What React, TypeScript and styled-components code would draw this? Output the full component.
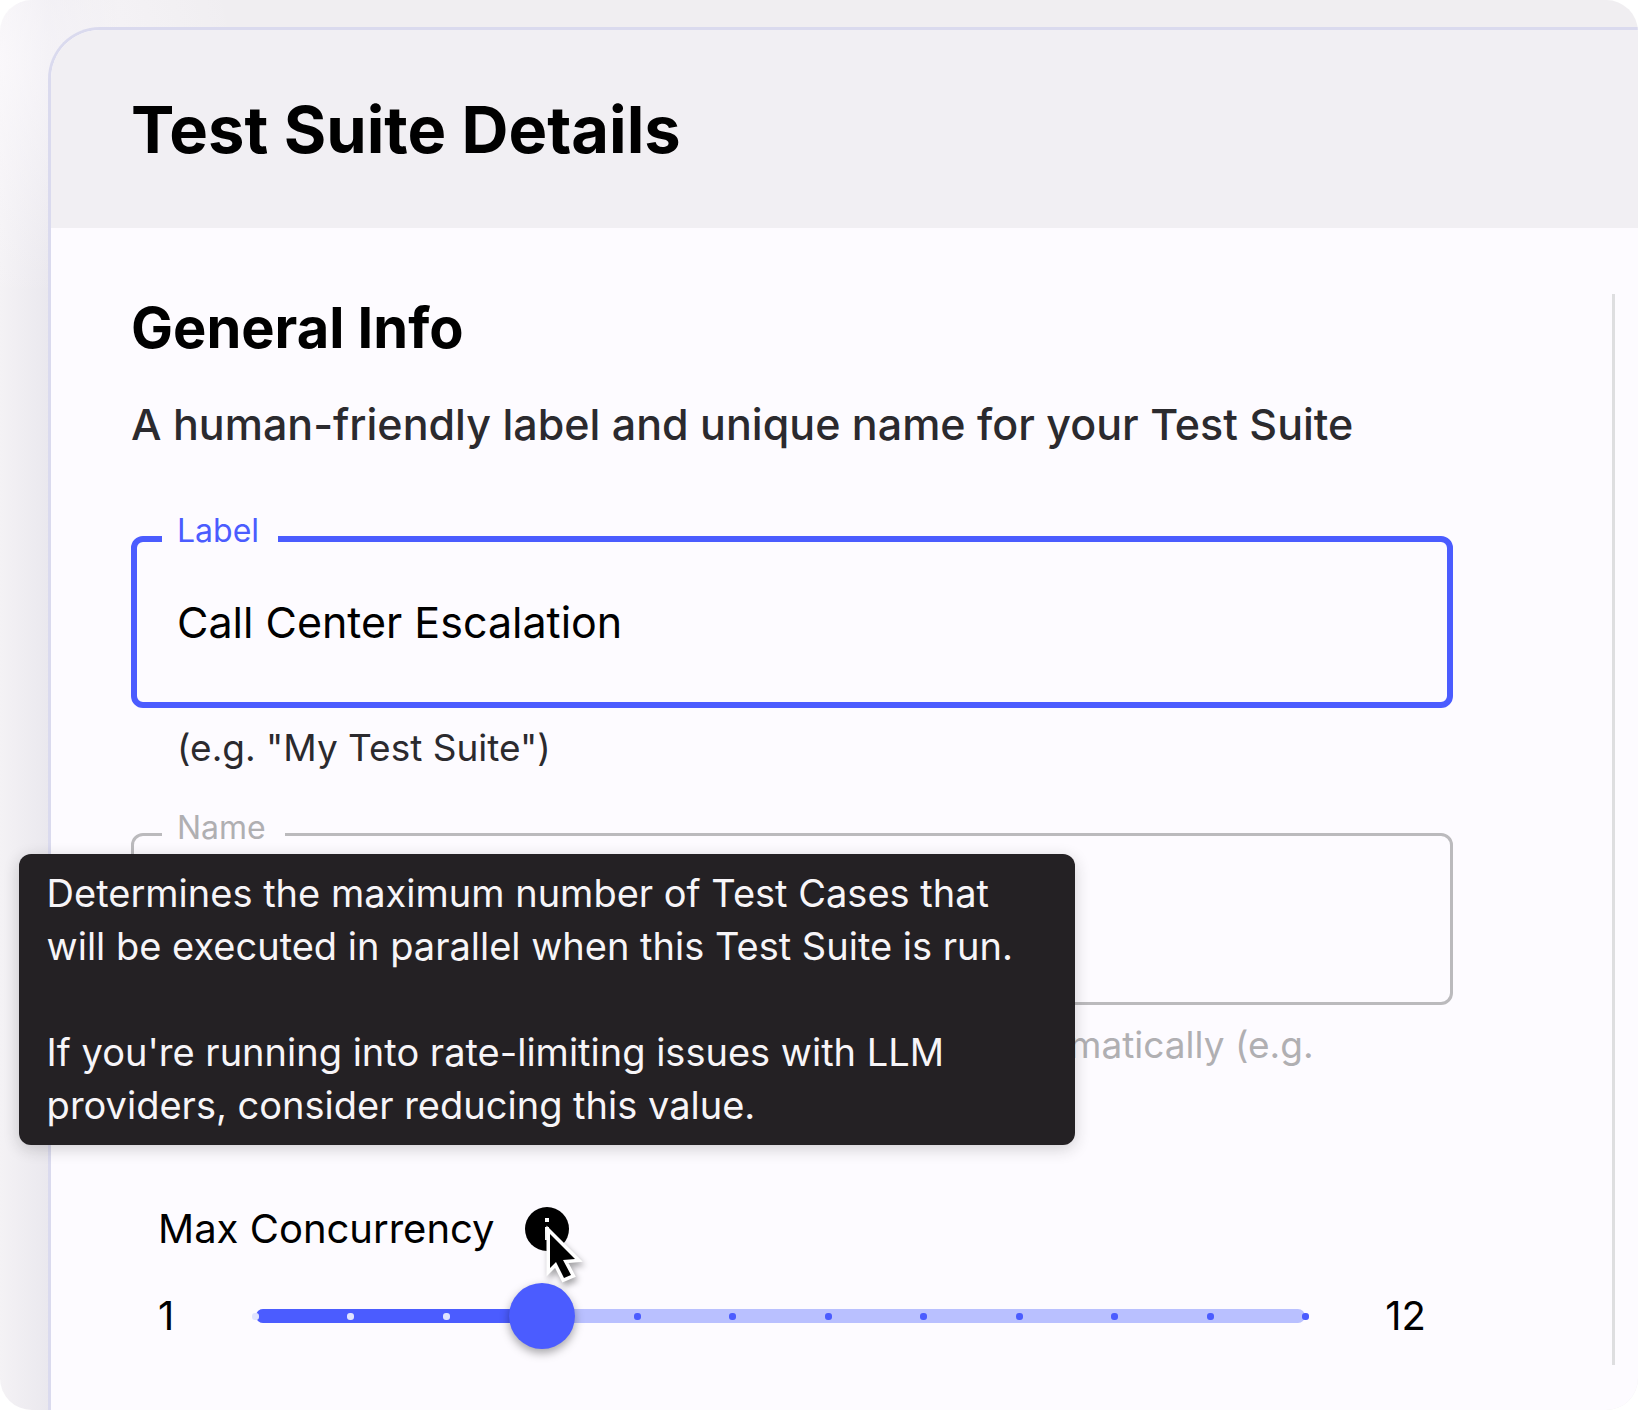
import React, { useState } from "react";
import styled, { createGlobalStyle } from "styled-components";

const color = {
  page: "#ffffff",
  canvas: "#f0eef1",
  surface: "#fdfbff",
  header: "#f1eff3",
  outline: "#dadaee",
  divider: "#dedee0",
  primary: "#4b5cff",
  primarySoft: "#b9c0ff",
  ink: "#000000",
  text: "#2b2a2e",
  muted: "#b0afb2",
  tooltip: "#242124",
};

const GlobalStyle = createGlobalStyle`
  *, *::before, *::after { box-sizing: border-box; }
  body {
    margin: 0;
    background: ${color.page};
    font-family: Inter, "Liberation Sans", sans-serif;
    color: ${color.ink};
  }
`;

const Canvas = styled.div`
  display: flex;
  min-height: 100vh;
  padding: 27px 0 0 48px;
  overflow: hidden;
  border-radius: 32px;
  background:
    radial-gradient(circle at 0 60px, rgba(252, 250, 253, 0.7) 0, rgba(252, 250, 253, 0) 240px),
    linear-gradient(90deg, #f4f2f5 0, #eae8ee 48px, ${color.canvas} 120px);
`;

const Card = styled.main`
  display: flex;
  flex: 1;
  flex-direction: column;
  min-width: 0;
  border: solid ${color.outline};
  border-width: 3px 0 0 3px;
  border-top-left-radius: 52px;
  background: ${color.surface};
`;

const Header = styled.header`
  display: flex;
  align-items: center;
  height: 198px;
  padding: 2px 80px 0;
  border-top-left-radius: 49px;
  background: ${color.header};
`;

const Title = styled.h1`
  margin: 0;
  font-size: 65px;
  font-weight: 700;
  line-height: 80px;
`;

const Body = styled.div`
  display: flex;
  flex: 1;
  padding: 66px 23px 45px 80px;
`;

const Section = styled.section`
  flex: 1;
  min-width: 0;
  padding-right: 159px;
  border-right: 3px solid ${color.divider};
`;

const SectionTitle = styled.h2`
  margin: 0;
  font-size: 56px;
  font-weight: 700;
  line-height: 68px;
`;

const Description = styled.p`
  margin: 32px 0 82px;
  color: ${color.text};
  font-size: 43px;
  font-weight: 500;
  line-height: 60px;
`;

const Fields = styled.div`
  display: flex;
  flex-direction: column;
  gap: 59px;
`;

const Field = styled.div`
  position: relative;
`;

const FieldLabel = styled.label<{ $active?: boolean }>`
  position: absolute;
  top: -25px;
  left: 31px;
  padding: 0 19px 0 15px;
  background: ${color.surface};
  color: ${(p) => (p.$active ? color.primary : color.muted)};
  font-size: 32px;
  line-height: 40px;
`;

const FieldInput = styled.input<{ $active?: boolean }>`
  display: block;
  width: 100%;
  height: 172px;
  padding: 0 ${(p) => (p.$active ? 40 : 43)}px;
  border: ${(p) => (p.$active ? `6px solid ${color.primary}` : "3px solid #bbbabd")};
  border-radius: 12px;
  outline: none;
  background: transparent;
  color: ${color.ink};
  font: 400 43px Inter, "Liberation Sans", sans-serif;
`;

const Helper = styled.p<{ $muted?: boolean }>`
  margin: 14px 46px 0;
  color: ${(p) => (p.$muted ? color.muted : color.text)};
  font-size: 37px;
  line-height: 52px;
`;

const Concurrency = styled.div`
  margin-top: 80px;
  padding: 0 27px;
`;

const LabelRow = styled.div`
  display: flex;
  align-items: center;
  gap: 30px;
  margin-bottom: 28px;
`;

const SliderLabel = styled.label`
  font-size: 40px;
  line-height: 52px;
`;

const Anchor = styled.div`
  position: relative;
  display: flex;
`;

const InfoButton = styled.button`
  display: flex;
  padding: 0;
  border: 0;
  background: none;
`;

const Tooltip = styled.div`
  position: absolute;
  bottom: calc(100% + 62px);
  left: 50%;
  z-index: 2;
  width: 1056px;
  padding: 13px 40px 13px 28px;
  transform: translateX(-50%);
  border-radius: 12px;
  background: ${color.tooltip};
  box-shadow: 0 4px 16px rgba(36, 33, 36, 0.2);
  color: #f7f5f8;
  font-size: 38px;
  line-height: 53px;
`;

const TooltipText = styled.p`
  margin: 0;

  & + & {
    margin-top: 53px;
  }
`;

const Pointer = styled.svg`
  position: absolute;
  top: 17px;
  left: 17px;
  z-index: 3;
  overflow: visible;
  filter: drop-shadow(2px 4px 3px rgba(0, 0, 0, 0.35));
  pointer-events: none;
`;

const SliderRow = styled.div`
  display: flex;
  align-items: center;
`;

const Bound = styled.span<{ $end?: boolean }>`
  width: ${(p) => (p.$end ? 88 : 65)}px;
  font-size: 40px;
  line-height: 52px;
  text-align: ${(p) => (p.$end ? "right" : "left")};
`;

const Slider = styled.div`
  display: grid;
  flex: 1;
  align-items: center;

  & > * {
    grid-area: 1 / 1;
  }
`;

const Rail = styled.div`
  height: 14px;
  margin: 0 33px;
  overflow: hidden;
  border-radius: 7px;
  background: ${color.primarySoft};
`;

const Filled = styled.div`
  height: 100%;
  background: ${color.primary};
`;

const Marks = styled.div`
  display: flex;
  justify-content: space-between;
  margin: 0 29px;
`;

const Mark = styled.span<{ $passed: boolean }>`
  width: 7px;
  height: 7px;
  border-radius: 3px;
  background: ${(p) => (p.$passed ? "#e0e3ff" : color.primary)};
`;

const Range = styled.input`
  width: 100%;
  height: 66px;
  margin: 0;
  appearance: none;
  background: transparent;

  &::-webkit-slider-thumb {
    appearance: none;
    width: 66px;
    height: 66px;
    border-radius: 50%;
    background: ${color.primary};
    box-shadow: 0 4px 10px rgba(0, 0, 0, 0.35);
  }
`;

const MIN = 1;
const MAX = 12;
const steps = Array.from({ length: MAX - MIN + 1 }, (_, i) => MIN + i);

export default function App() {
  const [label, setLabel] = useState("Call Center Escalation");
  const [value, setValue] = useState(4);

  return (
    <>
      <GlobalStyle />
      <Canvas>
        <Card>
          <Header>
            <Title>Test Suite Details</Title>
          </Header>
          <Body>
            <Section>
              <SectionTitle>General Info</SectionTitle>
              <Description>A human-friendly label and unique name for your Test Suite</Description>

              <Fields>
                <div>
                  <Field>
                    <FieldInput
                      id="suite-label"
                      $active
                      value={label}
                      onChange={(e) => setLabel(e.target.value)}
                      aria-describedby="suite-label-help"
                    />
                    <FieldLabel htmlFor="suite-label" $active>Label</FieldLabel>
                  </Field>
                  <Helper id="suite-label-help">(e.g. "My Test Suite")</Helper>
                </div>
                <div>
                  <Field>
                    <FieldInput id="suite-name" disabled aria-describedby="suite-name-help" />
                    <FieldLabel htmlFor="suite-name">Name</FieldLabel>
                  </Field>
                  <Helper id="suite-name-help" $muted>
                    The unique name of this Test Suite, generated automatically (e.g.
                    <br />
                    "my-test-suite")
                  </Helper>
                </div>
              </Fields>

              <Concurrency>
                <LabelRow>
                  <SliderLabel htmlFor="max-concurrency">Max Concurrency</SliderLabel>
                  <Anchor>
                    <InfoButton type="button" aria-label="About max concurrency" aria-describedby="concurrency-tip">
                      <svg width="44" height="44" viewBox="0 0 44 44" aria-hidden="true">
                        <circle cx="22" cy="22" r="22" fill="#000" />
                        <path d="M20 11h4v4h-4zM20 20h4v13h-4z" fill="#fff" />
                      </svg>
                    </InfoButton>
                    <Tooltip id="concurrency-tip" role="tooltip">
                      <TooltipText>
                        Determines the maximum number of Test Cases that will be executed in parallel when this Test
                        Suite is run.
                      </TooltipText>
                      <TooltipText>
                        If you're running into rate-limiting issues with LLM providers, consider reducing this value.
                      </TooltipText>
                    </Tooltip>
                    <Pointer width="42" height="60" viewBox="0 0 42 60" aria-hidden="true">
                      <path
                        d="M8 10v34l6-6 8 16 7-3-8-15 12-1z"
                        fill="#000"
                        stroke="#fff"
                        strokeWidth="7"
                        paintOrder="stroke"
                      />
                    </Pointer>
                  </Anchor>
                </LabelRow>
                <SliderRow>
                  <Bound>{MIN}</Bound>
                  <Slider>
                    <Rail>
                      <Filled style={{ width: `${((value - MIN) / (MAX - MIN)) * 100}%` }} />
                    </Rail>
                    <Marks>
                      {steps.map((s) => (
                        <Mark key={s} $passed={s <= value} />
                      ))}
                    </Marks>
                    <Range
                      id="max-concurrency"
                      type="range"
                      min={MIN}
                      max={MAX}
                      value={value}
                      onChange={(e) => setValue(Number(e.target.value))}
                    />
                  </Slider>
                  <Bound $end>{MAX}</Bound>
                </SliderRow>
              </Concurrency>
            </Section>
          </Body>
        </Card>
      </Canvas>
    </>
  );
}
